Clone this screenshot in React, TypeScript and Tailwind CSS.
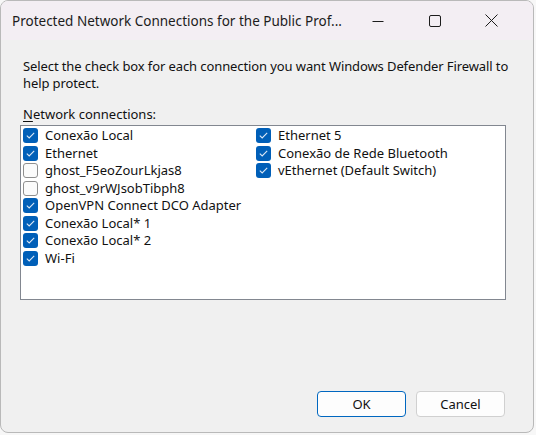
import React, { useState } from 'react';

interface Connection {
  name: string;
  checked: boolean;
}

const leftColumn: Connection[] = [
  { name: 'Conexão Local', checked: true },
  { name: 'Ethernet', checked: true },
  { name: 'ghost_F5eoZourLkjas8', checked: false },
  { name: 'ghost_v9rWJsobTibph8', checked: false },
  { name: 'OpenVPN Connect DCO Adapter', checked: true },
  { name: 'Conexão Local* 1', checked: true },
  { name: 'Conexão Local* 2', checked: true },
  { name: 'Wi-Fi', checked: true },
];

const rightColumn: Connection[] = [
  { name: 'Ethernet 5', checked: true },
  { name: 'Conexão de Rede Bluetooth', checked: true },
  { name: 'vEthernet (Default Switch)', checked: true },
];

const Check = ({ item }: { item: Connection }) => {
  const [on, setOn] = useState(item.checked);
  return (
    <div className="flex h-[17.5px] items-center" onClick={() => setOn(!on)}>
      {on ? (
        <span className="flex h-[15px] w-[15px] items-center justify-center rounded-[3px] bg-[#005fb8]">
          <svg width="9" height="7" viewBox="0 0 9 7" fill="none">
            <path d="M0.8 3.6 L3.2 5.9 L8.2 0.9" stroke="#dce8f5" strokeWidth="1.1" />
          </svg>
        </span>
      ) : (
        <span className="h-[15px] w-[15px] rounded-[3px] border border-[#8f8f8f] bg-[#fbfbfb]" />
      )}
      <span className="ml-[7px] whitespace-nowrap">{item.name}</span>
    </div>
  );
};

const App: React.FC = () => {
  return (
    <div className="h-[435px] w-[536px] bg-[#f7f7f7] text-[#111] [font-family:'Noto_Sans',sans-serif]">
      <div className="flex h-[433px] w-[534px] flex-col overflow-hidden rounded-[8px] border border-[#b9b9b9] bg-[#f0f0f0]">
        {/* Title bar */}
        <div className="flex h-[39px] shrink-0 items-center bg-[#f3eef3]">
          <span className="ml-[11px] flex-1 whitespace-nowrap pt-[1px] text-[13.5px] text-[#1c1c1c]">
            Protected Network Connections for the Public Prof...
          </span>
          <div className="flex h-full w-[57px] items-center justify-center">
            <svg width="12" height="12" viewBox="0 0 12 12">
              <path d="M0.5 6.5 H11.5" stroke="#1c1c1c" strokeWidth="1" />
            </svg>
          </div>
          <div className="flex h-full w-[57px] items-center justify-center">
            <svg width="12" height="12" viewBox="0 0 12 12">
              <rect x="0.5" y="0.5" width="11" height="11" rx="1.5" fill="none" stroke="#1c1c1c" strokeWidth="1" />
            </svg>
          </div>
          <div className="mr-[13px] flex h-full w-[57px] items-center justify-center">
            <svg width="13" height="13" viewBox="0 0 13 13">
              <path d="M0.5 0.5 L12.5 12.5 M12.5 0.5 L0.5 12.5" stroke="#1c1c1c" strokeWidth="1" />
            </svg>
          </div>
        </div>

        {/* Body */}
        <div className="flex flex-1 flex-col px-[19px] pt-[18px] text-[13px] leading-[17px]">
          <p className="whitespace-nowrap pl-[3px] tracking-[-0.1px]">
            Select the check box for each connection you want Windows Defender Firewall to
            <br />
            help protect.
          </p>
          <p className="mt-[14px] pl-[3px]">
            <span className="underline underline-offset-2">N</span>etwork connections:
          </p>
          <div className="mt-[2px] flex h-[175px] w-[486px] border border-[#828790] bg-white pl-[2px] pt-[1px]">
            <div className="w-[233px]">
              {leftColumn.map((c) => (
                <Check key={c.name} item={c} />
              ))}
            </div>
            <div>
              {rightColumn.map((c) => (
                <Check key={c.name} item={c} />
              ))}
            </div>
          </div>

          <div className="mt-auto mb-[15px] flex justify-end gap-[10px] pr-[9px]">
            <button className="h-[26px] w-[89px] rounded-[4px] border border-[#0067c0] bg-[#fdfdfd] text-[13px] text-[#111]">
              OK
            </button>
            <button className="h-[26px] w-[89px] rounded-[4px] border border-[#d0d0d0] bg-[#fdfdfd] text-[13px] text-[#111]">
              Cancel
            </button>
          </div>
        </div>
      </div>
    </div>
  );
};

export default App;
